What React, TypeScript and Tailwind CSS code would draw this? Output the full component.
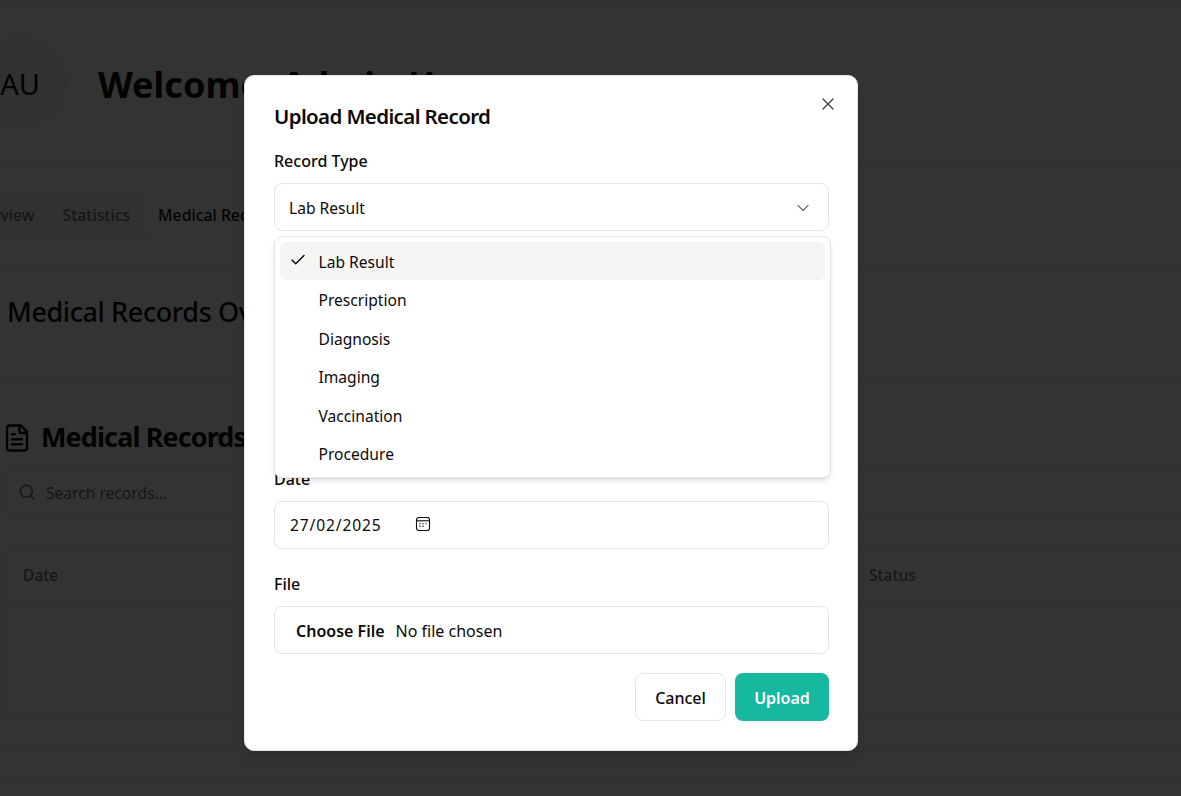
import { Check, ChevronDown, FileText, Search, X } from "lucide-react";

const recordTypes = ["Lab Result", "Prescription", "Diagnosis", "Imaging", "Vaccination", "Procedure"];

const FormField = ({ label, children }: { label: string; children?: React.ReactNode }) => (
  <div>
    <label className="mb-[9px] block h-[24px] text-[16px] leading-[23px] font-medium text-[#0c0a09]">{label}</label>
    <div className="flex h-[48px] items-center rounded-lg border border-[#e7e5e4] bg-white px-[14px] pt-[1px] text-[15.6px] text-[#0c0a09]">
      {children}
    </div>
  </div>
);

// the native date input's picker glyph
const PickerIcon = () => (
  <svg width="16" height="16" viewBox="0 0 16 16" fill="none" stroke="#0c0a09" strokeWidth="1.1" className="-translate-y-[1px]">
    <rect x="1.5" y="1.5" width="13" height="13" rx="2.5" />
    <path d="M1.5 4.8h13" />
    <path d="M4.5 7.6h1M7.5 7.6h1M10.5 7.6h1M4.5 10.2h1M7.5 10.2h1" strokeWidth="1.4" />
  </svg>
);

const DashboardBehind = () => (
  <div className="w-[1300px] font-['Noto_Sans',sans-serif] text-[#0c0a09]">
    <header className="mt-[5px] flex h-[156px] items-center gap-[31px] border-y border-[#e7e5e4] pb-[3px]">
      <div className="-ml-[27px] flex h-[94px] w-[94px] shrink-0 items-center justify-center rounded-full bg-[#f5f5f4] pt-[5px] text-[29px]">
        AU
      </div>
      <h1 className="mt-[7px] text-[36px] font-bold whitespace-nowrap">Welcome, Admin User</h1>
    </header>
    <div className="h-[107px] border-b border-[#e7e5e4] pt-[29px]">
      <div className="-ml-[51px] flex h-[45px] w-fit items-center rounded-md bg-[#f5f5f4] p-[1px] text-[15.8px] font-medium text-[#78716c]">
        <span className="px-[14px] pt-[12px] pb-[6px]">Overview</span>
        <span className="px-[14px] pt-[12px] pb-[6px]">Statistics</span>
        <span className="rounded-md bg-white px-[14px] pt-[12px] pb-[6px] text-[#0c0a09]">Medical Records</span>
      </div>
    </div>
    <div className="flex h-[116px] items-start border-b border-[#e7e5e4] pt-[24px] pl-[7px]">
      <h2 className="text-[27px] font-medium tracking-[-0.4px] whitespace-nowrap">Medical Records Overview</h2>
    </div>
    <div className="pl-[2px]">
      <div className="flex h-[84px] items-center gap-[9px] pt-[23px]">
        <FileText size={30} strokeWidth={2} />
        <h3 className="text-[27px] font-bold tracking-[-0.9px] whitespace-nowrap">Medical Records</h3>
      </div>
      <div className="flex h-[48px] items-center gap-[10px] rounded-lg border border-[#e7e5e4] pl-[15px] text-[15.6px] text-[#78716c]">
        <Search size={18} />
        <span className="pt-[4px]">Search records...</span>
      </div>
      <div className="mt-[29px] h-[174px] rounded-lg border border-[#e7e5e4]">
        <div className="relative flex h-[58px] items-center border-b border-[#e7e5e4] pt-[2px] pl-[20px] text-[15.6px] font-medium text-[#78716c]">
          <span>Date</span>
          <span className="absolute left-[866px]">Status</span>
        </div>
      </div>
    </div>
    <div className="mt-[29px] h-[31px] border-y border-[#e7e5e4]" />
  </div>
);

const UploadDialog = () => (
  <div className="relative h-[676px] w-[614px] rounded-[10px] border border-[#e7e5e4] bg-white pt-[25px] pr-[28px] pl-[29px] font-['Noto_Sans',sans-serif] text-[#0c0a09] shadow-lg">
    <button className="absolute top-[18px] right-[19px] text-[#44403c]" aria-label="Close">
      <X size={20} strokeWidth={1.5} />
    </button>
    <h2 className="mb-[19px] text-[20.5px] leading-[30px] font-semibold tracking-[-0.62px]">Upload Medical Record</h2>
    <div className="flex flex-col gap-[24.85px]">
      <FormField label="Record Type">
        <span className="flex-1 pt-[2px]">Lab Result</span>
        <ChevronDown size={20} strokeWidth={1.5} className="mr-[1px] text-[#78716c]" />
      </FormField>
      <FormField label="Title" />
      <FormField label="Provider" />
      <FormField label="Date">
        <span className="ml-[1px] pt-[2px] tracking-[0.85px]">27/02/2025</span>
        <span className="ml-[34px] flex">
          <PickerIcon />
        </span>
      </FormField>
      <FormField label="File">
        <span className="ml-[7px] text-[16px] font-semibold">Choose File</span>
        <span className="ml-[11px] text-[16px]">No file chosen</span>
      </FormField>
    </div>
    <div className="mt-[19px] flex justify-end gap-[9px]">
      <button className="h-[48px] w-[91px] rounded-lg border border-[#e7e5e4] bg-white pt-[2px] text-[16px] font-medium">Cancel</button>
      <button className="h-[48px] w-[94px] rounded-lg bg-[#17b8a0] pt-[2px] text-[16px] font-semibold text-white">Upload</button>
    </div>

    {/* open select list sits over the fields below it */}
    <div className="absolute top-[160px] left-[29px] w-[557px] rounded-lg border border-[#e7e5e4] bg-white p-[5px] shadow-md">
      {recordTypes.map((type, i) => (
        <div
          key={type}
          className={
            i === 0
              ? "flex h-[38.4px] items-center rounded-md bg-[#f5f5f4] text-[15.6px]"
              : "flex h-[38.4px] items-center rounded-md text-[15.6px]"
          }
        >
          <span className="flex w-[38.5px] justify-start pl-[9px]">{i === 0 && <Check size={18} className="-translate-y-[1px]" />}</span>
          <span className="pt-[3px]">{type}</span>
        </div>
      ))}
    </div>
  </div>
);

export default function App() {
  return (
    <div className="relative h-[796px] w-full overflow-hidden bg-white">
      <DashboardBehind />
      <div className="absolute inset-0 bg-black/80" />
      <div className="absolute top-[75px] left-[244px]">
        <UploadDialog />
      </div>
    </div>
  );
}
